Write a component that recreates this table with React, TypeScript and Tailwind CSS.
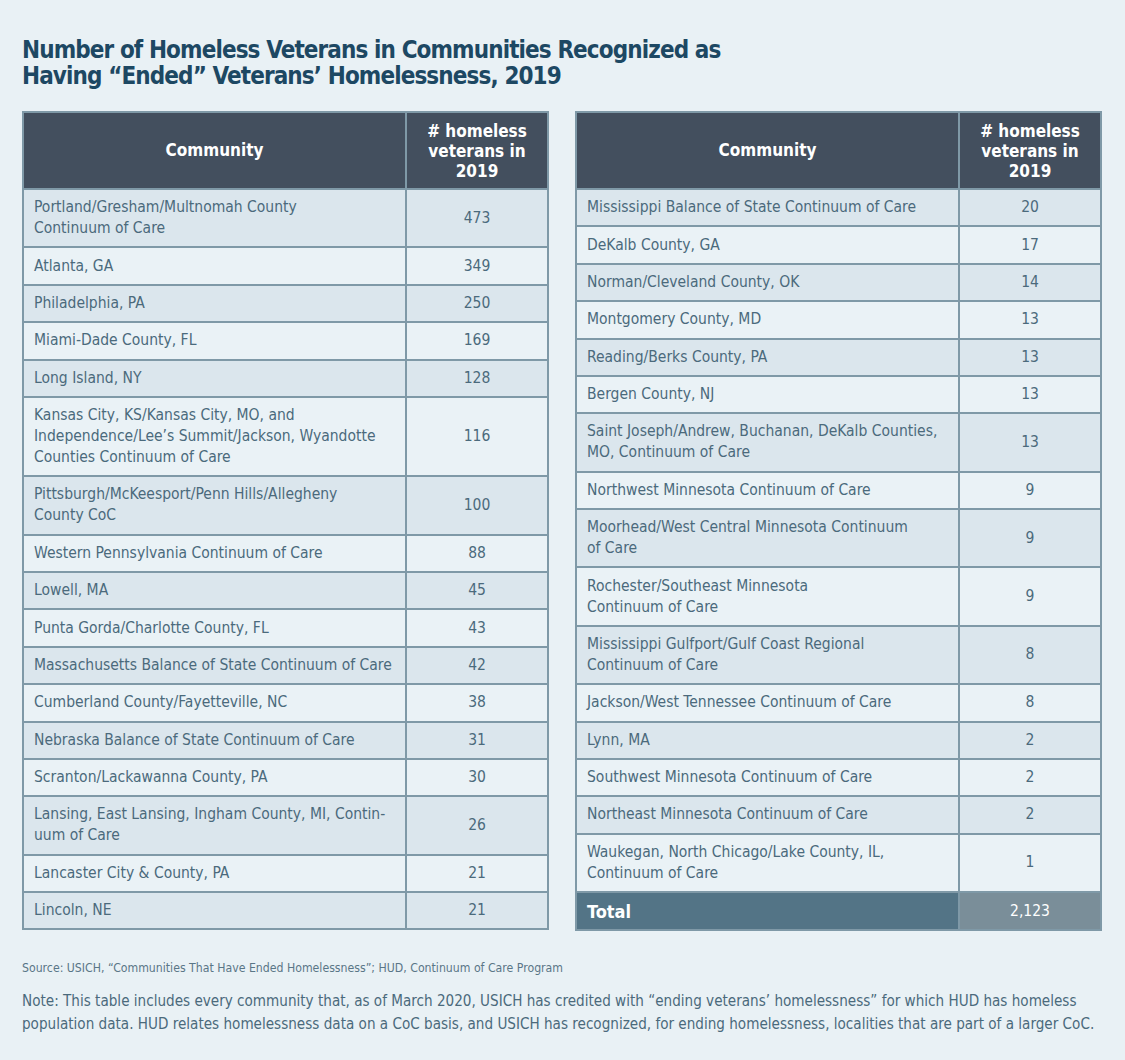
import React from 'react';

type Row = { name: string; value: string };

const leftRows: Row[] = [
  { name: 'Portland/Gresham/Multnomah County\nContinuum of Care', value: '473' },
  { name: 'Atlanta, GA', value: '349' },
  { name: 'Philadelphia, PA', value: '250' },
  { name: 'Miami-Dade County, FL', value: '169' },
  { name: 'Long Island, NY', value: '128' },
  {
    name: 'Kansas City, KS/Kansas City, MO, and\nIndependence/Lee’s Summit/Jackson, Wyandotte\nCounties Continuum of Care',
    value: '116',
  },
  { name: 'Pittsburgh/McKeesport/Penn Hills/Allegheny\nCounty CoC', value: '100' },
  { name: 'Western Pennsylvania Continuum of Care', value: '88' },
  { name: 'Lowell, MA', value: '45' },
  { name: 'Punta Gorda/Charlotte County, FL', value: '43' },
  { name: 'Massachusetts Balance of State Continuum of Care', value: '42' },
  { name: 'Cumberland County/Fayetteville, NC', value: '38' },
  { name: 'Nebraska Balance of State Continuum of Care', value: '31' },
  { name: 'Scranton/Lackawanna County, PA', value: '30' },
  { name: 'Lansing, East Lansing, Ingham County, MI, Contin-\nuum of Care', value: '26' },
  { name: 'Lancaster City & County, PA', value: '21' },
  { name: 'Lincoln, NE', value: '21' },
];

const rightRows: Row[] = [
  { name: 'Mississippi Balance of State Continuum of Care', value: '20' },
  { name: 'DeKalb County, GA', value: '17' },
  { name: 'Norman/Cleveland County, OK', value: '14' },
  { name: 'Montgomery County, MD', value: '13' },
  { name: 'Reading/Berks County, PA', value: '13' },
  { name: 'Bergen County, NJ', value: '13' },
  { name: 'Saint Joseph/Andrew, Buchanan, DeKalb Counties,\nMO, Continuum of Care', value: '13' },
  { name: 'Northwest Minnesota Continuum of Care', value: '9' },
  { name: 'Moorhead/West Central Minnesota Continuum\nof Care', value: '9' },
  { name: 'Rochester/Southeast Minnesota\nContinuum of Care', value: '9' },
  { name: 'Mississippi Gulfport/Gulf Coast Regional\nContinuum of Care', value: '8' },
  { name: 'Jackson/West Tennessee Continuum of Care', value: '8' },
  { name: 'Lynn, MA', value: '2' },
  { name: 'Southwest Minnesota Continuum of Care', value: '2' },
  { name: 'Northeast Minnesota Continuum of Care', value: '2' },
  { name: 'Waukegan, North Chicago/Lake County, IL,\nContinuum of Care', value: '1' },
];

const font = { fontFamily: '"DejaVu Sans Condensed", "Liberation Sans", sans-serif' };

const VeteransTable: React.FC<{ rows: Row[]; total?: string }> = ({ rows, total }) => (
  <table className="w-[527px] border-collapse border-2 border-[#7f99a7] text-[15.5px] text-[#4b6a7c]">
    <thead>
      <tr className="bg-[#434f5e] text-white">
        <th className="w-[383px] border-2 border-[#7f99a7] text-[17px] font-bold">Community</th>
        <th className="border-2 border-[#7f99a7] py-[7.5px] text-[17px] font-bold leading-[20px]">
          # homeless
          <br />
          veterans in
          <br />
          2019
        </th>
      </tr>
    </thead>
    <tbody>
      {rows.map((r, i) => (
        <tr key={r.name} className={i % 2 === 0 ? 'bg-[#dbe6ed]' : 'bg-[#eaf2f6]'}>
          <td className="whitespace-pre-line border-2 border-[#7f99a7] py-[7.2px] pl-[10px] leading-[21px]">{r.name}</td>
          <td className="border-2 border-[#7f99a7] text-center leading-[21px]">{r.value}</td>
        </tr>
      ))}
      {total && (
        <tr className="text-white">
          <td className="border-2 border-[#7f99a7] bg-[#537486] py-[7.5px] pl-[10px] text-[18px] font-bold leading-[21px]">
            Total
          </td>
          <td className="border-2 border-[#7f99a7] bg-[#7a8e99] text-center leading-[21px]">{total}</td>
        </tr>
      )}
    </tbody>
  </table>
);

export default function App() {
  return (
    <div className="min-h-[1060px] w-[1125px] bg-[#e9f1f5] pt-[37px]" style={font}>
      <h1 className="px-[22px] text-[24px] font-bold leading-[26px] tracking-[-0.9px] text-[#1d4863]">
        Number of Homeless Veterans in Communities Recognized as
        <br />
        Having “Ended” Veterans’ Homelessness, 2019
      </h1>

      <div className="mt-[22px] flex items-start gap-[26px] px-[22px]">
        <VeteransTable rows={leftRows} />
        <VeteransTable rows={rightRows} total="2,123" />
      </div>

      <p className="mt-[28px] px-[22px] text-[12.2px] text-[#5a7687]">
        Source: USICH, “Communities That Have Ended Homelessness”; HUD, Continuum of Care Program
      </p>
      <p className="mt-[13px] whitespace-nowrap px-[22px] text-[15.1px] leading-[23px] text-[#4b6a7c]">
        Note: This table includes every community that, as of March 2020, USICH has credited with “ending veterans’ homelessness” for which HUD has homeless
        <br />
        population data. HUD relates homelessness data on a CoC basis, and USICH has recognized, for ending homelessness, localities that are part of a larger CoC.
      </p>
    </div>
  );
}
